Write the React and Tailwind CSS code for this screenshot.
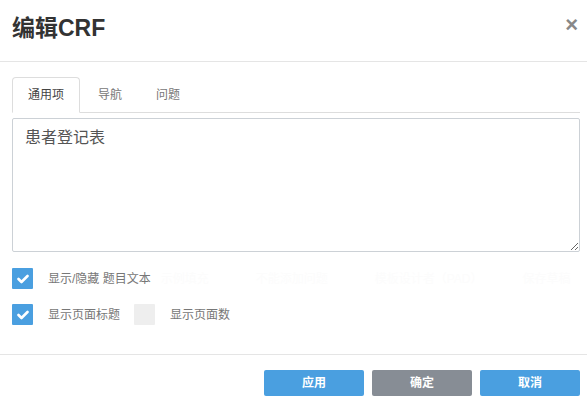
import React, { useState } from 'react';

const font = { fontFamily: '"Liberation Sans", "Noto Sans CJK SC", sans-serif' };

const Check = ({ checked, onClick }) => (
    <button
        onClick={onClick}
        className={`flex h-[21px] w-[21px] shrink-0 items-center justify-center rounded-[1px] ${checked ? 'bg-[#4a9fe0]' : 'bg-[#eeeeee]'}`}
    >
        {checked && (
            <svg width="12" height="10" viewBox="0 0 12 10">
                <polyline points="1.5,5 4.5,8 10.5,2" fill="none" stroke="white" strokeWidth="2.6" strokeLinecap="round" strokeLinejoin="round" />
            </svg>
        )}
    </button>
);

const App = () => {
    const [tab, setTab] = useState(0);
    const [name, setName] = useState('患者登记表');
    const [showText, setShowText] = useState(true);
    const [showTitle, setShowTitle] = useState(true);
    const [showCount, setShowCount] = useState(false);

    const tabs = ['通用项', '导航', '问题'];

    return (
        <div className="h-[403px] w-[587px] overflow-hidden bg-white" style={font}>
            {/* header */}
            <div className="flex h-[62px] items-center justify-between border-b border-[#e5e5e5] pl-[12px] pr-[9px]">
                <h2 className="-mt-[4px] text-[23px] font-bold text-[#333]">编辑CRF</h2>
                <button className="-mt-[12px] text-[22px] font-bold leading-none text-[#888]">×</button>
            </div>

            {/* body */}
            <div className="pb-[29px] pl-[12px] pr-[7px] pt-[15px]">
                <ul className="flex border-b border-[#dddddd]">
                    {tabs.map((t, i) => (
                        <li key={t} className="-mb-px mr-[2px]">
                            <button
                                onClick={() => setTab(i)}
                                className={`h-[36px] rounded-t-[4px] border px-[15px] text-[12px] ${tab === i ? 'border-[#dddddd] border-b-white bg-white text-[#444]' : 'border-transparent text-[#777]'}`}
                            >
                                {t}
                            </button>
                        </li>
                    ))}
                </ul>

                <textarea
                    value={name}
                    onChange={(e) => setName(e.target.value)}
                    className="mt-[5px] block h-[134px] w-full rounded-[2px] border border-[#ccd1d6] px-3 py-[7px] text-[16px] text-[#555] outline-none"
                />

                <div className="mt-[16px] flex items-center">
                    <Check checked={showText} onClick={() => setShowText(!showText)} />
                    <span className="ml-[15px] text-[12px] text-[#777]">显示/隐藏 题目文本</span>
                    <span className="ml-[10px] text-[12px] text-[#fcfcfc]">示例填充</span>
                    <span className="ml-[47px] text-[12px] text-[#fcfcfc]">不能添加问题</span>
                    <span className="ml-[47px] text-[12px] text-[#fcfcfc]">模板设计者（PAD）</span>
                    <span className="ml-[40px] text-[12px] text-[#fcfcfc]">保存草稿</span>
                </div>

                <div className="mt-[15px] flex items-center">
                    <Check checked={showTitle} onClick={() => setShowTitle(!showTitle)} />
                    <span className="ml-[15px] text-[12px] text-[#777]">显示页面标题</span>
                    <div className="ml-[14px]">
                        <Check checked={showCount} onClick={() => setShowCount(!showCount)} />
                    </div>
                    <span className="ml-[15px] text-[12px] text-[#777]">显示页面数</span>
                </div>
            </div>

            {/* footer */}
            <div className="flex justify-end gap-[8px] border-t border-[#e5e5e5] pr-[7px] pt-[15px]">
                <button className="h-[26px] w-[100px] rounded-[2px] bg-[#4a9fe0] text-[12px] font-bold text-white">应用</button>
                <button className="h-[26px] w-[100px] rounded-[2px] bg-[#878d95] text-[12px] font-bold text-white">确定</button>
                <button className="h-[26px] w-[100px] rounded-[2px] bg-[#4a9fe0] text-[12px] font-bold text-white">取消</button>
            </div>
        </div>
    );
};

export default App;
